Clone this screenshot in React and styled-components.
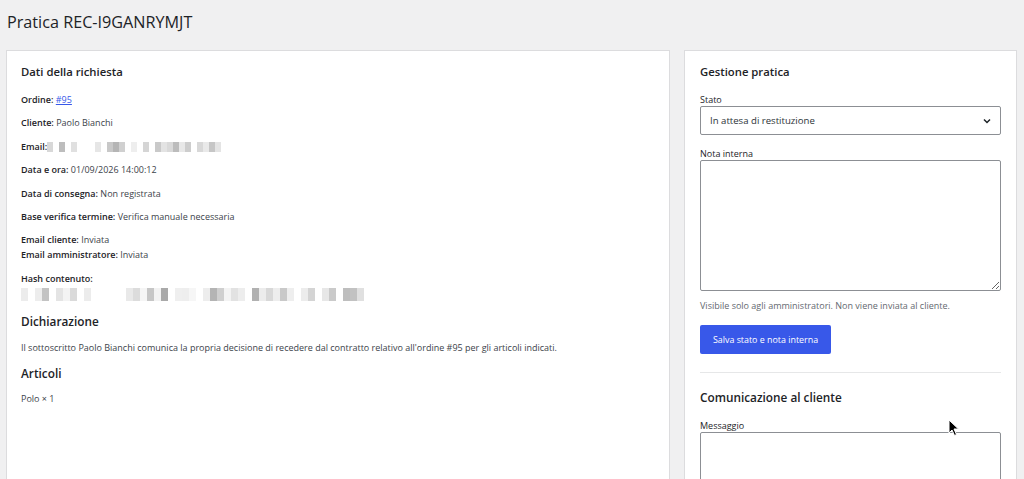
import styled, { createGlobalStyle } from "styled-components";

const GlobalStyle = createGlobalStyle`
  html, body {
    margin: 0;
    padding: 0;
    background: #f0f0f1;
    overflow: hidden;
  }
  body {
    font-family: "Open Sans", "Noto Sans", sans-serif;
    color: #1d2327;
  }
`;

const Page = styled.div`
  padding: 6px 7px 0 6px;
  height: 479px;
  box-sizing: border-box;
`;

const Title = styled.h1`
  margin: 0 0 0 1px;
  height: 44px;
  font-size: 16.2px;
  font-weight: 400;
  line-height: 32px;
  color: #1d2327;
`;

const Columns = styled.div`
  display: grid;
  grid-template-columns: 664px 333px;
  column-gap: 14px;
  align-items: start;
`;

const Card = styled.section`
  background: #fff;
  border: 1px solid #dcdcde;
  box-sizing: border-box;
  min-height: 460px;
  padding: 11px 15px 0 14px;
`;

const SideCard = styled(Card)`
  padding: 11px 15px 0 15px;
`;

const Heading = styled.h2`
  margin: ${(p) => p.$top || 0}px 0 0 0;
  font-size: ${(p) => p.$size || 11.3}px;
  font-weight: 600;
  line-height: 20px;
  color: #1d2327;
`;

const Row = styled.p`
  margin: ${(p) => (p.$top !== undefined ? p.$top : 8.4)}px 0 0 0;
  font-size: 9px;
  line-height: 15px;
  color: #3c434a;

  strong {
    font-weight: 600;
    color: #1d2327;
  }

  a {
    color: #3858e9;
  }
`;

const Mosaic = styled.span`
  display: ${(p) => (p.$block ? "flex" : "inline-flex")};
  vertical-align: middle;
  margin-top: ${(p) => (p.$block ? 2 : 0)}px;
`;

const Cell = styled.span`
  display: inline-block;
  width: ${(p) => p.$w}px;
  height: ${(p) => p.$h}px;
  background: ${(p) => p.$c};
`;

const Field = styled.div`
  margin-top: ${(p) => p.$top || 0}px;
  display: flex;
  flex-direction: column;
`;

const Label = styled.label`
  font-size: 9px;
  line-height: 12px;
  font-weight: 500;
  color: #1d2327;
`;

const SelectBox = styled.div`
  height: 29px;
  border: 1px solid #8c8f94;
  border-radius: 2px;
  box-sizing: border-box;
  display: flex;
  align-items: center;
  justify-content: space-between;
  padding: 0 8px 0 9px;
  font-size: 9.6px;
  color: #2c3338;
`;

const TextArea = styled.textarea`
  height: ${(p) => p.$h}px;
  border: 1px solid #8c8f94;
  border-radius: 2px;
  box-sizing: border-box;
  resize: vertical;
  font-family: inherit;
  margin: 0;
`;

const Help = styled.p`
  margin: 8px 0 0 0;
  font-size: 9px;
  line-height: 14px;
  color: #646970;
`;

const Button = styled.button`
  margin-top: 12px;
  width: 131px;
  height: 29px;
  border: none;
  border-radius: 2px;
  background: #3858e9;
  color: #fff;
  font-family: inherit;
  font-size: 8.9px;
  padding: 0;
`;

const Divider = styled.hr`
  margin: 18px 0 0 0;
  border: none;
  border-top: 1px solid #e6e7e8;
`;

const Cursor = styled.svg`
  position: fixed;
  left: 948px;
  top: 419px;
`;

const emailCells = [
  "#d8d8d8", "#fff", "#bdbdbd", "#fff", "#e0e0e0", "#fff", "#fff", "#fff", "#e6e6e6",
  "#fff", "#c8c8c8", "#b5b5b5", "#d0d0d0", "#fff", "#eee", "#fff", "#d5d5d5", "#fff",
  "#c9c9c9", "#e3e3e3", "#d9d9d9", "#bcbcbc", "#e8e8e8", "#cdcdcd", "#fff", "#d8d8d8",
  "#e9e9e9", "#c6c6c6", "#e4e4e4",
];

const hashCells = [
  "#ececec", "#fff", "#ededed", "#c3c3c3", "#fff", "#e4e4e4", "#f3f3f3", "#dadada", "#fff",
  "#ececec", "#fff", "#fff", "#fff", "#fff", "#fff", "#e9e9e9", "#dcdcdc", "#f5f5f5",
  "#c6c6c6", "#f2f2f2", "#a9a9a9", "#fff", "#efefef", "#eeeeee", "#f6f6f6", "#fff",
  "#ededed", "#b4b4b4", "#cfcfcf", "#f3f3f3", "#e2e2e2", "#ededed", "#fff", "#b1b1b1",
  "#ececec", "#d8d8d8", "#ededed", "#c9c9c9", "#eeeeee", "#fff", "#ececec", "#d4d4d4",
  "#fff", "#e7e7e7", "#cacaca", "#fff", "#bebebe", "#c2c2c2", "#e0e0e0",
];

function Redacted({ cells, w, h, block }) {
  return (
    <Mosaic $block={block}>
      {cells.map((c, i) => (
        <Cell key={i} $w={w} $h={h} $c={c} />
      ))}
    </Mosaic>
  );
}

export default function App() {
  return (
    <>
      <GlobalStyle />
      <Page>
        <Title>Pratica REC-I9GANRYMJT</Title>
        <Columns>
          <Card>
            <Heading>Dati della richiesta</Heading>
            <Row $top={10}>
              <strong>Ordine:</strong> <a href="#">#95</a>
            </Row>
            <Row>
              <strong>Cliente:</strong> Paolo Bianchi
            </Row>
            <Row>
              <strong>Email:</strong>
              <Redacted cells={emailCells} w={6} h={10} />
            </Row>
            <Row>
              <strong>Data e ora:</strong> 01/09/2026 14:00:12
            </Row>
            <Row>
              <strong>Data di consegna:</strong> Non registrata
            </Row>
            <Row>
              <strong>Base verifica termine:</strong> Verifica manuale necessaria
            </Row>
            <Row>
              <strong>Email cliente:</strong> Inviata
            </Row>
            <Row $top={0}>
              <strong>Email amministratore:</strong> Inviata
            </Row>
            <Row>
              <strong>Hash contenuto:</strong>
              <Redacted cells={hashCells} w={7} h={13} block />
            </Row>
            <Heading $top={10} $size={11.8}>Dichiarazione</Heading>
            <Row $top={9}>
              Il sottoscritto Paolo Bianchi comunica la propria decisione di recedere dal
              contratto relativo all'ordine #95 per gli articoli indicati.
            </Row>
            <Heading $top={8} $size={11.8}>Articoli</Heading>
            <Row $top={8}>Polo × 1</Row>
          </Card>

          <SideCard>
            <Heading>Gestione pratica</Heading>
            <Field $top={12}>
              <Label>Stato</Label>
              <SelectBox>
                <span>In attesa di restituzione</span>
                <svg width="10" height="10" viewBox="0 0 10 10">
                  <path d="M2 3.5 L5 6.5 L8 3.5" fill="none" stroke="#1d2327" strokeWidth="1.5" />
                </svg>
              </SelectBox>
            </Field>
            <Field $top={13}>
              <Label>Nota interna</Label>
              <TextArea $h={131} />
            </Field>
            <Help>Visibile solo agli amministratori. Non viene inviata al cliente.</Help>
            <Button>Salva stato e nota interna</Button>
            <Divider />
            <Heading $top={14} $size={11.8}>Comunicazione al cliente</Heading>
            <Field $top={13}>
              <Label>Messaggio</Label>
              <TextArea $h={60} />
            </Field>
          </SideCard>
        </Columns>
      </Page>
      <Cursor width="12" height="18" viewBox="0 0 12 18">
        <path d="M1 1 L1 14 L4 11 L6.5 16.5 L8.5 15.5 L6 10 L10.5 10 Z" fill="#000" stroke="#fff" strokeWidth="1" />
      </Cursor>
    </>
  );
}
